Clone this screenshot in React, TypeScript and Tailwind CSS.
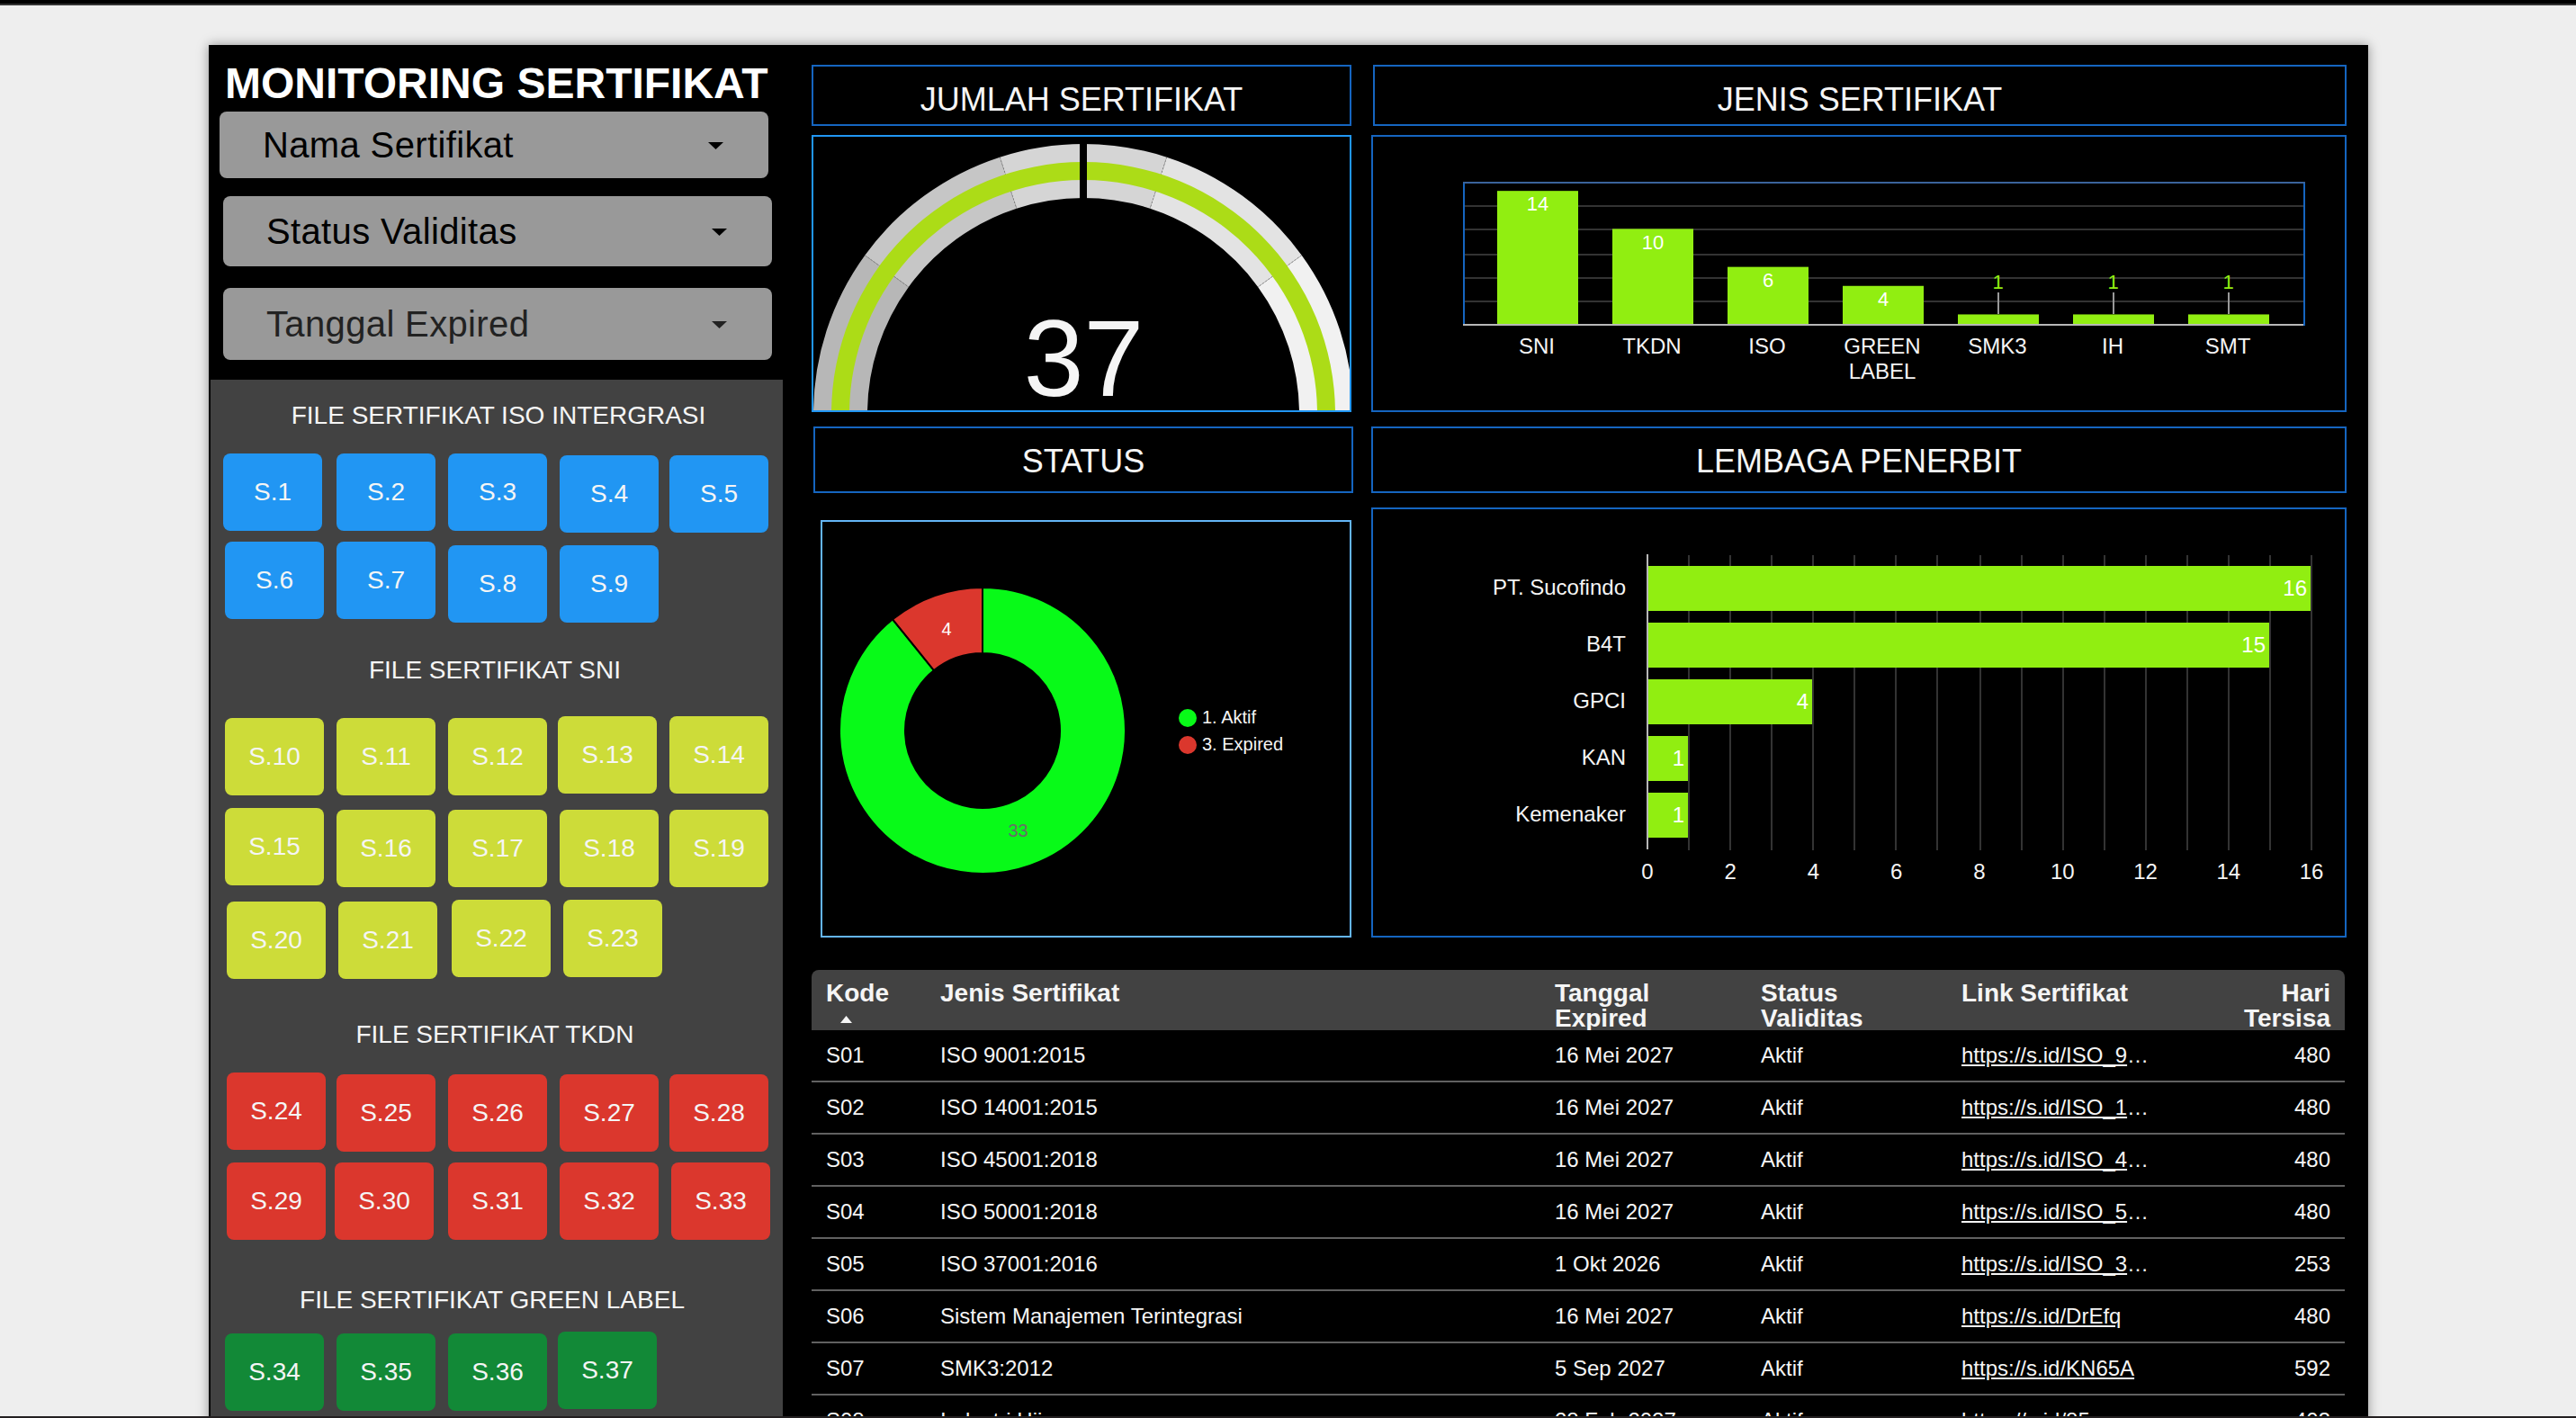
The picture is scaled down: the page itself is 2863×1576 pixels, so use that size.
import React from "react";

type FileButton = { label: string; place: string };

const isoRows: FileButton[][] = [
  [
    { label: "S.1", place: "ml-3.5" },
    { label: "S.2", place: "ml-4" },
    { label: "S.3", place: "ml-3.5" },
    { label: "S.4", place: "ml-3.5 mt-0.5" },
    { label: "S.5", place: "ml-3 mt-0.5" },
  ],
  [
    { label: "S.6", place: "ml-4" },
    { label: "S.7", place: "ml-3.5" },
    { label: "S.8", place: "ml-3.5 mt-1" },
    { label: "S.9", place: "ml-3.5 mt-1" },
  ],
];

const sniRows: FileButton[][] = [
  [
    { label: "S.10", place: "ml-4 mt-0.5" },
    { label: "S.11", place: "ml-3.5 mt-0.5" },
    { label: "S.12", place: "ml-3.5 mt-0.5" },
    { label: "S.13", place: "ml-3" },
    { label: "S.14", place: "ml-3.5" },
  ],
  [
    { label: "S.15", place: "ml-4" },
    { label: "S.16", place: "ml-3.5 mt-0.5" },
    { label: "S.17", place: "ml-3.5 mt-0.5" },
    { label: "S.18", place: "ml-3.5 mt-0.5" },
    { label: "S.19", place: "ml-3 mt-0.5" },
  ],
  [
    { label: "S.20", place: "ml-[18px] mt-0.5" },
    { label: "S.21", place: "ml-3.5 mt-0.5" },
    { label: "S.22", place: "ml-4" },
    { label: "S.23", place: "ml-3.5" },
  ],
];

const tkdnRows: FileButton[][] = [
  [
    { label: "S.24", place: "ml-[18px]" },
    { label: "S.25", place: "ml-3 mt-0.5" },
    { label: "S.26", place: "ml-3.5 mt-0.5" },
    { label: "S.27", place: "ml-3.5 mt-0.5" },
    { label: "S.28", place: "ml-3 mt-0.5" },
  ],
  [
    { label: "S.29", place: "ml-[18px]" },
    { label: "S.30", place: "ml-2.5" },
    { label: "S.31", place: "ml-4" },
    { label: "S.32", place: "ml-3.5" },
    { label: "S.33", place: "ml-3.5" },
  ],
];

const greenRows: FileButton[][] = [
  [
    { label: "S.34", place: "ml-4 mt-0.5" },
    { label: "S.35", place: "ml-3.5 mt-0.5" },
    { label: "S.36", place: "ml-3.5 mt-0.5" },
    { label: "S.37", place: "ml-3" },
  ],
];

function Heading({ children, className }: { children: React.ReactNode; className: string }) {
  return (
    <h2 className={`flex shrink-0 items-center justify-center text-[28px] leading-8 whitespace-nowrap text-neutral-100 ${className}`}>
      {children}
    </h2>
  );
}

function FileRow({ items, color, className }: { items: FileButton[]; color: string; className: string }) {
  return (
    <div className={`flex shrink-0 items-start ${className}`}>
      {items.map((b) => (
        <button
          key={b.label}
          className={`flex h-[86px] w-[110px] shrink-0 items-center justify-center rounded-lg text-[28px] leading-8 text-neutral-100 ${color} ${b.place}`}
        >
          {b.label}
        </button>
      ))}
    </div>
  );
}

function Dropdown({ label, className }: { label: string; className: string }) {
  return (
    <div className={`flex w-[610px] shrink-0 items-center justify-between rounded-lg bg-[#999999] pr-[50px] pl-12 text-[40px] leading-12 tracking-[0.36px] ${className}`}>
      <span>{label}</span>
      <svg width="17" height="8" viewBox="0 0 17 8" className="mt-0.5">
        <path d="M0 0H17L8.5 8Z" fill="currentColor" />
      </svg>
    </div>
  );
}

function PanelTitle({ children, className }: { children: React.ReactNode; className: string }) {
  return (
    <h2 className={`flex shrink-0 items-center justify-center border-2 border-[#1565c0] text-[36px] leading-10 whitespace-nowrap text-neutral-100 ${className}`}>
      {children}
    </h2>
  );
}

const GX = 1204;
const GY = 460;

function polar(cx: number, cy: number, r: number, deg: number) {
  const a = (deg * Math.PI) / 180;
  return `${(cx + r * Math.sin(a)).toFixed(2)} ${(cy - r * Math.cos(a)).toFixed(2)}`;
}

function ring(cx: number, cy: number, ro: number, ri: number, from: number, to: number) {
  const large = to - from > 180 ? 1 : 0;
  return `M${polar(cx, cy, ro, from)}A${ro} ${ro} 0 ${large} 1 ${polar(cx, cy, ro, to)}L${polar(cx, cy, ri, to)}A${ri} ${ri} 0 ${large} 0 ${polar(cx, cy, ri, from)}Z`;
}

function Gauge() {
  const shades = ["#b7b7b7", "#c6c6c6", "#d5d5d5", "#e3e3e3", "#f1f1f1"];
  return (
    <div className="mt-2.5 h-[308px] w-[600px] shrink-0 border-2 border-[#2196f3]">
      <svg width="596" height="304" viewBox="904 152 596 304">
        {shades.map((s, i) => (
          <path key={s} d={ring(GX, GY, 300, 240, -90 + i * 36, -54 + i * 36)} fill={s} />
        ))}
        {[-54, -18, 18, 54].map((a) => (
          <path key={a} d={`M${polar(GX, GY, 300, a)}L${polar(GX, GY, 240, a)}`} stroke="#777" strokeWidth="0.8" strokeDasharray="2 2" />
        ))}
        <path d={ring(GX, GY, 280, 260, -90, 90)} fill="#acdc17" />
        <rect x="1200" y="158" width="8" height="64" fill="#000" />
        <text x="1204.5" y="440" fontSize="120" textAnchor="middle" fill="#f5f5f5">
          37
        </text>
      </svg>
    </div>
  );
}

const kinds = [
  { lines: ["SNI"], value: 14 },
  { lines: ["TKDN"], value: 10 },
  { lines: ["ISO"], value: 6 },
  { lines: ["GREEN", "LABEL"], value: 4 },
  { lines: ["SMK3"], value: 1 },
  { lines: ["IH"], value: 1 },
  { lines: ["SMT"], value: 1 },
];

function KindChart() {
  return (
    <div className="mt-2.5 h-[308px] w-[1084px] shrink-0 border-2 border-[#1565c0]">
      <svg width="1080" height="304" viewBox="1526 152 1080 304">
        {[228, 254, 282, 308, 334].map((y) => (
          <rect key={y} x="1628" y={y} width="932" height="2" fill="#333" />
        ))}
        <rect x="1626" y="202" width="2" height="160" fill="#1565c0" />
        <rect x="2560" y="202" width="2" height="160" fill="#1565c0" />
        <rect x="1626" y="202" width="936" height="2" fill="#3a639b" />
        {kinds.map((k, i) => {
          const x = 1664 + i * 128;
          const mid = x + 45;
          const h = k.value * 10.56;
          const top = 360 - h;
          return (
            <g key={k.lines[0]} textAnchor="middle">
              <rect x={x} y={top} width="90" height={h} fill="#91ee11" />
              {k.value > 1 ? (
                <text x={mid} y={top + 22.2} fontSize="22" fill="#fff">
                  {k.value}
                </text>
              ) : (
                <>
                  <rect x={mid - 1} y="325" width="2" height="24" fill="#999" />
                  <text x={mid - 0.5} y="321" fontSize="22" fill="#91ee11">
                    {k.value}
                  </text>
                </>
              )}
              {k.lines.map((l, n) => (
                <text key={l} x={mid - 1} y={392.5 + n * 28} fontSize="24" fill="#f5f5f5">
                  {l}
                </text>
              ))}
            </g>
          );
        })}
        <rect x="1626" y="360" width="934" height="2" fill="#b7b7b7" />
      </svg>
    </div>
  );
}

function StatusChart() {
  const split = 360 - (4 / 37) * 360;
  return (
    <div className="mt-[30px] ml-2.5 h-[464px] w-[590px] shrink-0 border-2 border-[#64b5f6]">
      <svg width="586" height="460" viewBox="914 580 586 460">
        <path d={ring(1092, 812, 159, 86, 0, split)} fill="#08fa18" stroke="#000" strokeWidth="2" />
        <path d={ring(1092, 812, 159, 86, split, 360)} fill="#db372d" stroke="#000" strokeWidth="2" />
        <g fontSize="20">
          <text x="1052" y="705.5" textAnchor="middle" fill="#fff">
            4
          </text>
          <text x="1131.5" y="930" textAnchor="middle" fill="#6a6a6a">
            33
          </text>
          <circle cx="1320" cy="798" r="10" fill="#08fa18" />
          <circle cx="1320" cy="828" r="10" fill="#db372d" />
          <g fill="#f5f5f5">
            <text x="1336" y="804">
              1. Aktif
            </text>
            <text x="1336" y="834">
              3. Expired
            </text>
          </g>
        </g>
      </svg>
    </div>
  );
}

const publishers = [
  { name: "PT. Sucofindo", value: 16 },
  { name: "B4T", value: 15 },
  { name: "GPCI", value: 4 },
  { name: "KAN", value: 1 },
  { name: "Kemenaker", value: 1 },
];

const gridX = (n: number) => 1830 + n * 46 + (n > 7 ? 2 : 0);

function PublisherChart() {
  const ticks = Array.from({ length: 16 }, (_, i) => i + 1);
  return (
    <div className="mt-4 h-[478px] w-[1084px] shrink-0 border-2 border-[#1565c0]">
      <svg width="1080" height="474" viewBox="1526 566 1080 474" fontSize="24">
        {ticks.map((n) => (
          <rect key={n} x={gridX(n)} y="617" width="2" height="328" fill="#333" />
        ))}
        {publishers.map((p, i) => {
          const y = 629 + i * 63;
          const end = gridX(p.value);
          return (
            <g key={p.name} textAnchor="end">
              <rect x="1832" y={y} width={end - 1832} height="50" fill="#91ee11" />
              <text x={end - 4} y={y + 32.5} fill="#fff">
                {p.value}
              </text>
              <text x="1807" y={y + 32} fill="#f5f5f5">
                {p.name}
              </text>
            </g>
          );
        })}
        <rect x="1830" y="616" width="2" height="328" fill="#b7b7b7" />
        {[0, 2, 4, 6, 8, 10, 12, 14, 16].map((n) => (
          <text key={n} x={1831 + n * 46.125} y="976.5" textAnchor="middle" fill="#f5f5f5">
            {n}
          </text>
        ))}
      </svg>
    </div>
  );
}

const rows = [
  ["S01", "ISO 9001:2015", "16 Mei 2027", "https://s.id/ISO_9", "…", "480"],
  ["S02", "ISO 14001:2015", "16 Mei 2027", "https://s.id/ISO_1", "…", "480"],
  ["S03", "ISO 45001:2018", "16 Mei 2027", "https://s.id/ISO_4", "…", "480"],
  ["S04", "ISO 50001:2018", "16 Mei 2027", "https://s.id/ISO_5", "…", "480"],
  ["S05", "ISO 37001:2016", "1 Okt 2026", "https://s.id/ISO_3", "…", "253"],
  ["S06", "Sistem Manajemen Terintegrasi", "16 Mei 2027", "https://s.id/DrEfq", "", "480"],
  ["S07", "SMK3:2012", "5 Sep 2027", "https://s.id/KN65A", "", "592"],
  ["S08", "Industri Hijau", "28 Feb 2027", "https://s.id/85", "", "403"],
];

function CertificateTable() {
  return (
    <div className="mt-9 w-[1704px] shrink-0 text-neutral-100">
      <div className="grid h-[67px] grid-cols-[143px_683px_229px_223px_239px_187px] overflow-hidden rounded-t-lg bg-[#424242] pt-3 text-[28px] leading-7 font-bold">
        <div className="pl-4">
          Kode
          <svg width="13" height="8" viewBox="0 0 13 8" className="mt-[11px] ml-4">
            <path d="M0 8L6.5 0L13 8Z" fill="currentColor" />
          </svg>
        </div>
        <div>Jenis Sertifikat</div>
        <div>
          Tanggal
          <br />
          Expired
        </div>
        <div>
          Status
          <br />
          Validitas
        </div>
        <div>Link Sertifikat</div>
        <div className="pr-4 text-right">
          Hari
          <br />
          Tersisa
        </div>
      </div>
      {rows.map(([code, name, date, link, rest, days]) => (
        <div
          key={code}
          className="grid h-[58px] grid-cols-[143px_683px_229px_223px_239px_187px] items-center border-b-2 border-[#616161] text-2xl leading-7 whitespace-nowrap"
        >
          <div className="pl-4">{code}</div>
          <div>{name}</div>
          <div>{date}</div>
          <div>Aktif</div>
          <div>
            <a className="underline">{link}</a>
            {rest}
          </div>
          <div className="pr-4 text-right">{days}</div>
        </div>
      ))}
    </div>
  );
}

export default function App() {
  return (
    <div className="flex h-[1576px] w-full flex-col overflow-hidden bg-[#eeeeee] font-['Liberation_Sans',Arial,sans-serif]">
      <div className="h-1.5 shrink-0 border-b-2 border-[#333333] bg-black" />
      <div className="h-[1568px] shrink-0 overflow-hidden pt-11 pl-[232px]">
        <div className="flex h-[1600px] w-[2400px] bg-black shadow-[0_0_12px_rgba(0,0,0,0.4)]">
          <aside className="flex w-[638px] shrink-0 flex-col">
            <h1 className="flex h-[74px] shrink-0 items-center pt-[11px] pl-[18px] text-[48px] leading-none font-bold whitespace-nowrap text-white">
              MONITORING SERTIFIKAT
            </h1>
            <Dropdown label="Nama Sertifikat" className="ml-3 h-[74px] text-black" />
            <Dropdown label="Status Validitas" className="mt-5 ml-4 h-[78px] text-black" />
            <Dropdown label="Tanggal Expired" className="mt-6 ml-4 h-20 text-[#222222]" />
            <div className="mt-[22px] ml-0.5 flex w-[636px] flex-1 flex-col bg-[#424242]">
              <Heading className="h-[82px] pb-0.5 pl-1">FILE SERTIFIKAT ISO INTERGRASI</Heading>
              <FileRow items={isoRows[0]} color="bg-[#2196f3]" className="h-22" />
              <FileRow items={isoRows[1]} color="bg-[#2196f3]" className="mt-2.5 h-[90px]" />
              <Heading className="h-[104px] pt-0.5 pr-1">FILE SERTIFIKAT SNI</Heading>
              <FileRow items={sniRows[0]} color="bg-[#cddc39]" className="h-22" />
              <FileRow items={sniRows[1]} color="bg-[#cddc39]" className="mt-3.5 h-22" />
              <FileRow items={sniRows[2]} color="bg-[#cddc39]" className="mt-3.5 h-22" />
              <Heading className="h-[104px] pt-5 pr-1">FILE SERTIFIKAT TKDN</Heading>
              <FileRow items={tkdnRows[0]} color="bg-[#db372d]" className="h-22" />
              <FileRow items={tkdnRows[1]} color="bg-[#db372d]" className="mt-3 h-[86px]" />
              <Heading className="h-[102px] pt-8 pr-2.5">FILE SERTIFIKAT GREEN LABEL</Heading>
              <FileRow items={greenRows[0]} color="bg-[#128937]" className="h-22" />
            </div>
          </aside>
          <main className="ml-8 flex flex-col pt-[22px]">
            <div className="flex shrink-0">
              <div className="flex w-[602px] shrink-0 flex-col">
                <PanelTitle className="h-[68px] w-[600px] pt-2.5">JUMLAH SERTIFIKAT</PanelTitle>
                <Gauge />
                <PanelTitle className="mt-4 ml-0.5 h-[74px] w-[600px] pt-1">STATUS</PanelTitle>
                <StatusChart />
              </div>
              <div className="ml-5 flex w-[1084px] shrink-0 flex-col">
                <PanelTitle className="ml-0.5 h-[68px] w-[1082px] pt-2.5">JENIS SERTIFIKAT</PanelTitle>
                <KindChart />
                <PanelTitle className="mt-4 h-[74px] w-[1084px] pt-1">LEMBAGA PENERBIT</PanelTitle>
                <PublisherChart />
              </div>
            </div>
            <CertificateTable />
          </main>
        </div>
      </div>
      <div className="h-0.5 shrink-0 bg-[#231f20]" />
    </div>
  );
}
